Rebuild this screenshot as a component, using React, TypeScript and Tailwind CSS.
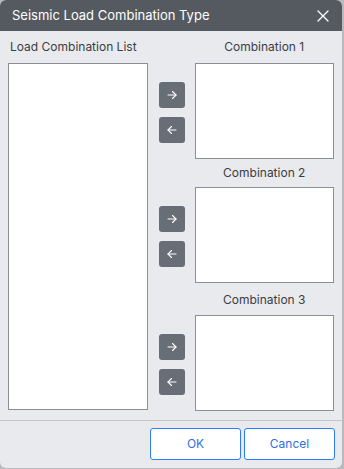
import React from 'react'

// Small arrow used in the move buttons
function Arrow({ dir }: { dir: 'right' | 'left' }) {
  return (
    <svg width="10" height="10" viewBox="0 0 10 10" fill="none" stroke="white" strokeWidth="1.1" strokeLinecap="round" strokeLinejoin="round">
      {dir === 'right' ? (
        <>
          <path d="M1 5h8" />
          <path d="M5.5 1.5L9 5l-3.5 3.5" />
        </>
      ) : (
        <>
          <path d="M9 5H1" />
          <path d="M4.5 1.5L1 5l3.5 3.5" />
        </>
      )}
    </svg>
  )
}

function MoveButtons() {
  return (
    <div className="flex h-[96px] flex-col gap-[9px] pt-[19px]">
      <button className="flex h-[26px] w-[26px] items-center justify-center rounded-[3px] bg-[#686e76]">
        <Arrow dir="right" />
      </button>
      <button className="flex h-[26px] w-[26px] items-center justify-center rounded-[3px] bg-[#686e76]">
        <Arrow dir="left" />
      </button>
    </div>
  )
}

function ListBox({ className }: { className: string }) {
  return <div className={`border border-[#8b8e94] bg-white ${className}`} />
}

export default function App() {
  return (
    <div className="h-[469px] w-[344px] bg-[#b9babd]" style={{ fontFamily: 'Inter, "Noto Sans", sans-serif' }}>
      <div className="flex h-[468px] w-[342px] flex-col overflow-hidden rounded-[6px] bg-[#e9eaee]">
        {/* title bar */}
        <div className="flex h-[31px] items-center justify-between bg-[#555a61] pl-[12px] pr-[13px]">
          <span className="text-[13px] text-white">Seismic Load Combination Type</span>
          <svg width="12" height="12" viewBox="0 0 12 12" stroke="white" strokeWidth="1.3" strokeLinecap="round">
            <path d="M1 1l10 10M11 1L1 11" />
          </svg>
        </div>

        {/* body */}
        <div className="flex px-[8px] text-[12px] text-[#3a3d42]">
          <div className="flex w-[141px] flex-col">
            <div className="flex h-[32px] items-center pl-[2px]">Load Combination List</div>
            <ListBox className="h-[347px]" />
          </div>

          <div className="ml-[11px] mr-[10px] flex w-[26px] flex-col">
            <div className="h-[32px]" />
            <MoveButtons />
            <div className="h-[28px]" />
            <MoveButtons />
            <div className="h-[32px]" />
            <MoveButtons />
          </div>

          <div className="flex w-[141px] flex-col">
            <div className="flex h-[32px] items-center justify-center">Combination 1</div>
            <ListBox className="h-[96px]" />
            <div className="flex h-[28px] items-center justify-center">Combination 2</div>
            <ListBox className="h-[96px]" />
            <div className="flex h-[32px] items-center justify-center pt-[2px]">Combination 3</div>
            <ListBox className="h-[96px]" />
          </div>
        </div>

        {/* footer */}
        <div className="mt-[9px] flex justify-end gap-[3px] border-t border-[#c3c7cc] pr-[7px] pt-[7px]">
          <button className="h-[32px] w-[91px] rounded-[3px] border border-[#2f7cf6] bg-white text-[12px] text-[#2f6fe0]">OK</button>
          <button className="h-[32px] w-[91px] rounded-[3px] border border-[#2f7cf6] bg-white text-[12px] text-[#2f6fe0]">Cancel</button>
        </div>
      </div>
    </div>
  )
}
